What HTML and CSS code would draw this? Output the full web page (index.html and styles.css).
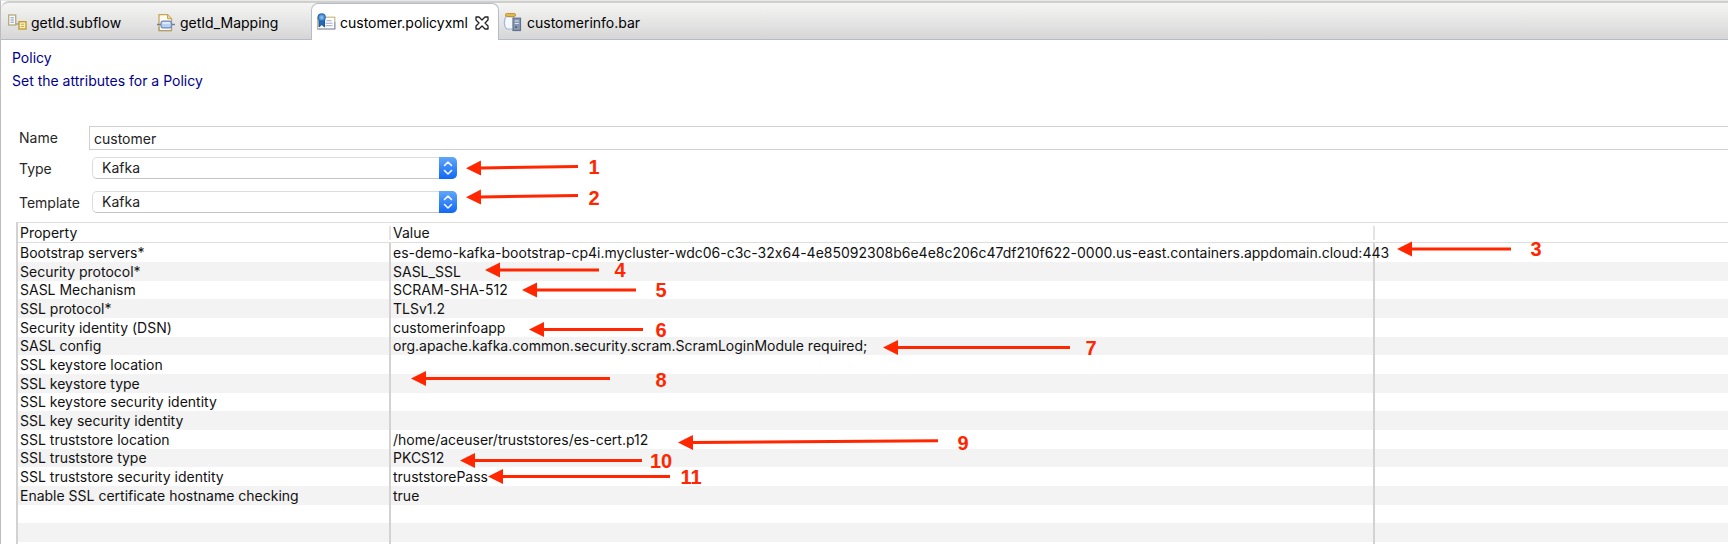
FILE: index.html
```html
<!DOCTYPE html>
<html lang="en">
<head>
<meta charset="utf-8">
<title>customer.policyxml</title>
<link rel="stylesheet" href="styles.css">
</head>
<body>
<main class="editor">
  <nav class="tabs">
    <button class="tab tab-subflow" type="button">
      <svg class="icon" width="20" height="20" viewBox="0 0 20 20" fill="none">
        <rect x="1.7" y="2" width="7" height="10" fill="#fff" stroke="#b5a97c" stroke-width="1.3"/>
        <path d="M3.5 4.800h3.4M3.5 7h3.4M3.5 9.200h3.4" stroke="#7d8fc4"/>
        <path d="M9 11h3" stroke="#98a7b8" stroke-width="1.5"/>
        <rect x="12" y="8.7" width="7" height="7.3" fill="#fff8cf" stroke="#c39a2c" stroke-width="1.4"/>
        <path d="M13.7 11.200h3.6M13.7 13.400h3.6" stroke="#c8a028"/>
      </svg>
      getId.subflow
    </button>
    <button class="tab tab-mapping" type="button">
      <svg class="icon" width="20" height="20" viewBox="0 0 20 20" fill="none">
        <path d="M3 17.7V1.7h8.5l4 4v12z" fill="#fdfaf0" stroke="#c7a551" stroke-width="1.3"/>
        <path d="M11.5 1.7v4h4" fill="#ead79f" stroke="#c7a551"/>
        <path d="M15.5 14v3.7H3V14" stroke="#a99c78"/>
        <path d="M1 11.500h18" stroke="#6f7f95" stroke-width="1.4"/>
        <rect x="5" y="8.2" width="10.5" height="6.6" rx="2" fill="#b9d0f5" stroke="#6e88bd" stroke-width="1.2"/>
        <path d="M6.500 10h7.5" stroke="#fff"/>
      </svg>
      getId_Mapping
    </button>
    <button class="tab tab-active" type="button">
      <svg class="icon" width="20" height="20" viewBox="0 0 20 20" fill="none">
        <rect x="1.500" y="4.200" width="17.300" height="11.800" fill="#fff" stroke="#c8b88b" stroke-width="1.2"/>
        <path d="M1.500 16h17.300V9" stroke="#8c9ac0" stroke-width="1.2"/>
        <path d="M10.500 7.700h5M9.500 10.200h7M9.500 12.700h7" stroke="#9ba6cd"/>
        <path d="M3 6h5.500v8l-1.700-1.500-1-.8-1 .8L3 14z" fill="#2767b3" stroke="#1f5799"/>
        <circle cx="5.700" cy="4.400" r="3.500" fill="#5999dc" stroke="#2869ae" stroke-width="1.2"/>
        <circle cx="5.700" cy="4.400" r="1.4" fill="#8abdf0"/>
      </svg>
      customer.policyxml
      <svg class="close" width="14" height="14" viewBox="0 0 14 14" fill="#fff" stroke="#222" stroke-width="1.3" stroke-linejoin="round">
        <path d="M1 1h3l3 3 3-3h3v3l-3 3 3 3v3h-3l-3-3-3 3H1v-3l3-3-3-3z"/>
      </svg>
    </button>
    <button class="tab tab-bar" type="button">
      <svg class="icon" width="20" height="20" viewBox="0 0 20 20" fill="none">
        <path d="M3 3.500C.7 7 .7 14 4 16h7V4z" fill="#f4f8ff" stroke="#a4b4dc" stroke-width="1.2"/>
        <rect x="2.500" y=".6" width="10" height="2.800" rx="1.2" fill="#e5bd50" stroke="#bd902b"/>
        <rect x="10" y="5.200" width="7.5" height="12.3" fill="#8797b2" stroke="#63728c" stroke-width="1.2"/>
        <path d="M11.700 8h4.200M11.700 10.500h4.200" stroke="#dbe2ee"/>
        <path d="M12 14h2" stroke="#2f3f58"/>
      </svg>
      customerinfo.bar
    </button>
  </nav>

  <header class="heading">
    <h1 class="heading-line">Policy</h1>
    <p class="heading-line">Set the attributes for a Policy</p>
  </header>

  <form class="form">
    <label class="label" for="name">Name</label>
    <input class="text-box" id="name" type="text" value="customer">
    <label class="label picker-label" for="type">Type</label>
    <div class="picker">
      <select class="select" id="type"><option>Kafka</option></select>
      <svg class="stepper" width="18" height="22" viewBox="0 0 18 22" fill="none" stroke="#fff" stroke-width="1.5" stroke-linecap="round" stroke-linejoin="round"><path d="M5.500 8.500L9 5l3.500 3.500M5.500 13.500L9 17l3.500-3.500"/></svg>
    </div>
    <label class="label picker-label" for="template">Template</label>
    <div class="picker">
      <select class="select" id="template"><option>Kafka</option></select>
      <svg class="stepper" width="18" height="22" viewBox="0 0 18 22" fill="none" stroke="#fff" stroke-width="1.5" stroke-linecap="round" stroke-linejoin="round"><path d="M5.500 8.500L9 5l3.500 3.500M5.500 13.500L9 17l3.500-3.500"/></svg>
    </div>
  </form>

  <table class="grid">
    <colgroup><col class="col-property"><col class="col-value"><col></colgroup>
    <thead>
      <tr><th><span class="head">Property</span></th><th><span class="head">Value</span></th><th></th></tr>
    </thead>
    <tbody>
      <tr><td>Bootstrap servers*</td><td>es-demo-kafka-bootstrap-cp4i.mycluster-wdc06-c3c-32x64-4e85092308b6e4e8c206c47df210f622-0000.us-east.containers.appdomain.cloud:443</td><td></td></tr>
      <tr><td>Security protocol*</td><td>SASL_SSL</td><td></td></tr>
      <tr><td>SASL Mechanism</td><td>SCRAM-SHA-512</td><td></td></tr>
      <tr><td>SSL protocol*</td><td>TLSv1.2</td><td></td></tr>
      <tr><td>Security identity (DSN)</td><td>customerinfoapp</td><td></td></tr>
      <tr><td>SASL config</td><td>org.apache.kafka.common.security.scram.ScramLoginModule required;</td><td></td></tr>
      <tr><td>SSL keystore location</td><td></td><td></td></tr>
      <tr><td>SSL keystore type</td><td></td><td></td></tr>
      <tr><td>SSL keystore security identity</td><td></td><td></td></tr>
      <tr><td>SSL key security identity</td><td></td><td></td></tr>
      <tr><td>SSL truststore location</td><td>/home/aceuser/truststores/es-cert.p12</td><td></td></tr>
      <tr><td>SSL truststore type</td><td>PKCS12</td><td></td></tr>
      <tr><td>SSL truststore security identity</td><td>truststorePass</td><td></td></tr>
      <tr><td>Enable SSL certificate hostname checking</td><td>true</td><td></td></tr>
      <tr><td></td><td></td><td></td></tr>
      <tr><td></td><td></td><td></td></tr>
      <tr><td></td><td></td><td></td></tr>
    </tbody>
  </table>

  <svg class="callouts" width="1728" height="544" viewBox="0 0 1728 544">
    <defs>
      <marker id="head" markerUnits="userSpaceOnUse" markerWidth="16" markerHeight="16" refX="0" refY="8" orient="auto-start-reverse" viewBox="0 0 16 16">
        <path class="arrow-head" d="M0 .5L15 8 0 15.500z"/>
      </marker>
    </defs>
    <g class="arrows">
      <path d="M481 168L578 166.500"/>
      <path d="M481 197L578 195.500"/>
      <path d="M1412 249H1511"/>
      <path d="M500 270H599"/>
      <path d="M537 290H636"/>
      <path d="M544 329.500H643"/>
      <path d="M898 347.500H1070"/>
      <path d="M426 378.500H610"/>
      <path d="M693 442.500L938 440.800"/>
      <path d="M475 460.500H642"/>
      <path d="M503 476.500H670"/>
    </g>
    <g class="numbers">
      <text x="594" y="174">1</text>
      <text x="594" y="205">2</text>
      <text x="1536" y="256">3</text>
      <text x="620" y="277">4</text>
      <text x="661" y="297">5</text>
      <text x="661" y="337">6</text>
      <text x="1091" y="355">7</text>
      <text x="661" y="387">8</text>
      <text x="963" y="450">9</text>
      <text x="661" y="468">10</text>
      <text x="691" y="484">11</text>
    </g>
  </svg>
</main>
</body>
</html>
```
FILE: styles.css
```css
* { box-sizing: border-box; }

body {
  margin: 0;
  background: #fff;
  color: #111;
  font-family: Inter, "Liberation Sans", sans-serif;
  font-size: 14px;
  font-variant-ligatures: no-contextual;
  line-height: 18px;
}

.editor {
  position: relative;
  height: 100vh;
  overflow: hidden;
  border-top: 1px solid #e8e8e8;
  border-left: 1px solid #bdbdbd;
}

/* Tab strip */
.tabs {
  display: flex;
  height: 39px;
  border-top: 2px solid #cfcfcb;
  border-bottom: 1px solid #b4bccb;
  border-top-left-radius: 8px;
  background: linear-gradient(#f5f5f4, #d6d6d6);
}

.tab {
  display: flex;
  align-items: center;
  gap: 4px;
  padding: 3px 6px 0;
  border: 0;
  background: none;
  color: #000;
  font: inherit;
  font-variant-ligatures: inherit;
  white-space: nowrap;
}

.tab-subflow { width: 149px; }
.tab-mapping { width: 161px; }

.tab-active {
  width: 188px;
  height: 37px;
  padding: 1px 4px 0;
  border: 1px solid #b4bccb;
  border-bottom: 0;
  border-radius: 7px 7px 0 0;
  background: #fff;
}

.tab-bar { padding: 3px 4px 0; }
.icon { flex: none; }
.close { flex: none; margin-left: auto; margin-right: 5px; }

/* Heading */
.heading {
  padding: 9px 11px 0;
  color: #00008b;
}

.heading-line {
  margin: 0 0 5px;
  font-size: 14px;
  font-weight: 400;
  line-height: 18px;
}

/* Policy fields */
.form {
  display: grid;
  grid-template-columns: 70px 1fr;
  grid-template-rows: 24px 36px 32px;
  align-items: center;
  margin-top: 36px;
  padding-left: 18px;
}

.label { color: #262626; }
.picker-label { padding-top: 2px; }

.text-box {
  width: 100%;
  height: 24px;
  padding: 0 4px;
  border: 1px solid #cfcfcf;
  border-right: 0;
  background: #fff;
  color: #222;
  font: inherit;
}

.picker {
  display: flex;
  width: 365px;
  height: 22px;
  margin-left: 3px;
  border: 1px solid #dcdcdc;
  border-bottom-color: #c4c4c4;
  border-radius: 5px;
}

.select {
  flex: 1;
  padding: 0 9px;
  border: 0;
  background: none;
  color: #222;
  font: inherit;
  appearance: none;
}

.stepper {
  margin: -1px;
  border-radius: 0 5px 5px 0;
  background: linear-gradient(#5fa6fb, #1168f5);
}

/* Property table */
.grid {
  width: calc(100% - 15px);
  margin: 4px 0 0 15px;
  border-top: 1px solid #dedede;
  border-left: 2px solid #d2d2d2;
  border-spacing: 0;
  table-layout: fixed;
}

.col-property { width: 373px; }
.col-value { width: 984px; }

.grid th,
.grid td {
  height: 19px;
  padding: 0 2px;
  text-align: left;
  font-weight: 400;
  line-height: 18px;
  white-space: nowrap;
}

.grid th {
  height: 20px;
  padding: 0 0 0 2px;
  border-bottom: 1px solid #dedede;
}

.grid tr:nth-child(3n) td { height: 18px; }
.grid tbody tr:nth-child(even) { background: #f3f3f3; }

.grid td:not(:last-child) { border-right: 2px solid #d2d2d2; }

.head {
  display: block;
  height: 14px;
  border-right: 2px solid #e4e4e4;
  line-height: 14px;
}

/* Numbered callouts */
.callouts {
  position: absolute;
  top: -1px;
  left: -1px;
  pointer-events: none;
}

.arrows path {
  fill: none;
  stroke: #ff2600;
  stroke-width: 3;
  marker-start: url(#head);
}

.arrow-head { fill: #ff2600; }

.numbers {
  fill: #ff2600;
  font: bold 20px "Liberation Sans", sans-serif;
  text-anchor: middle;
}
```
